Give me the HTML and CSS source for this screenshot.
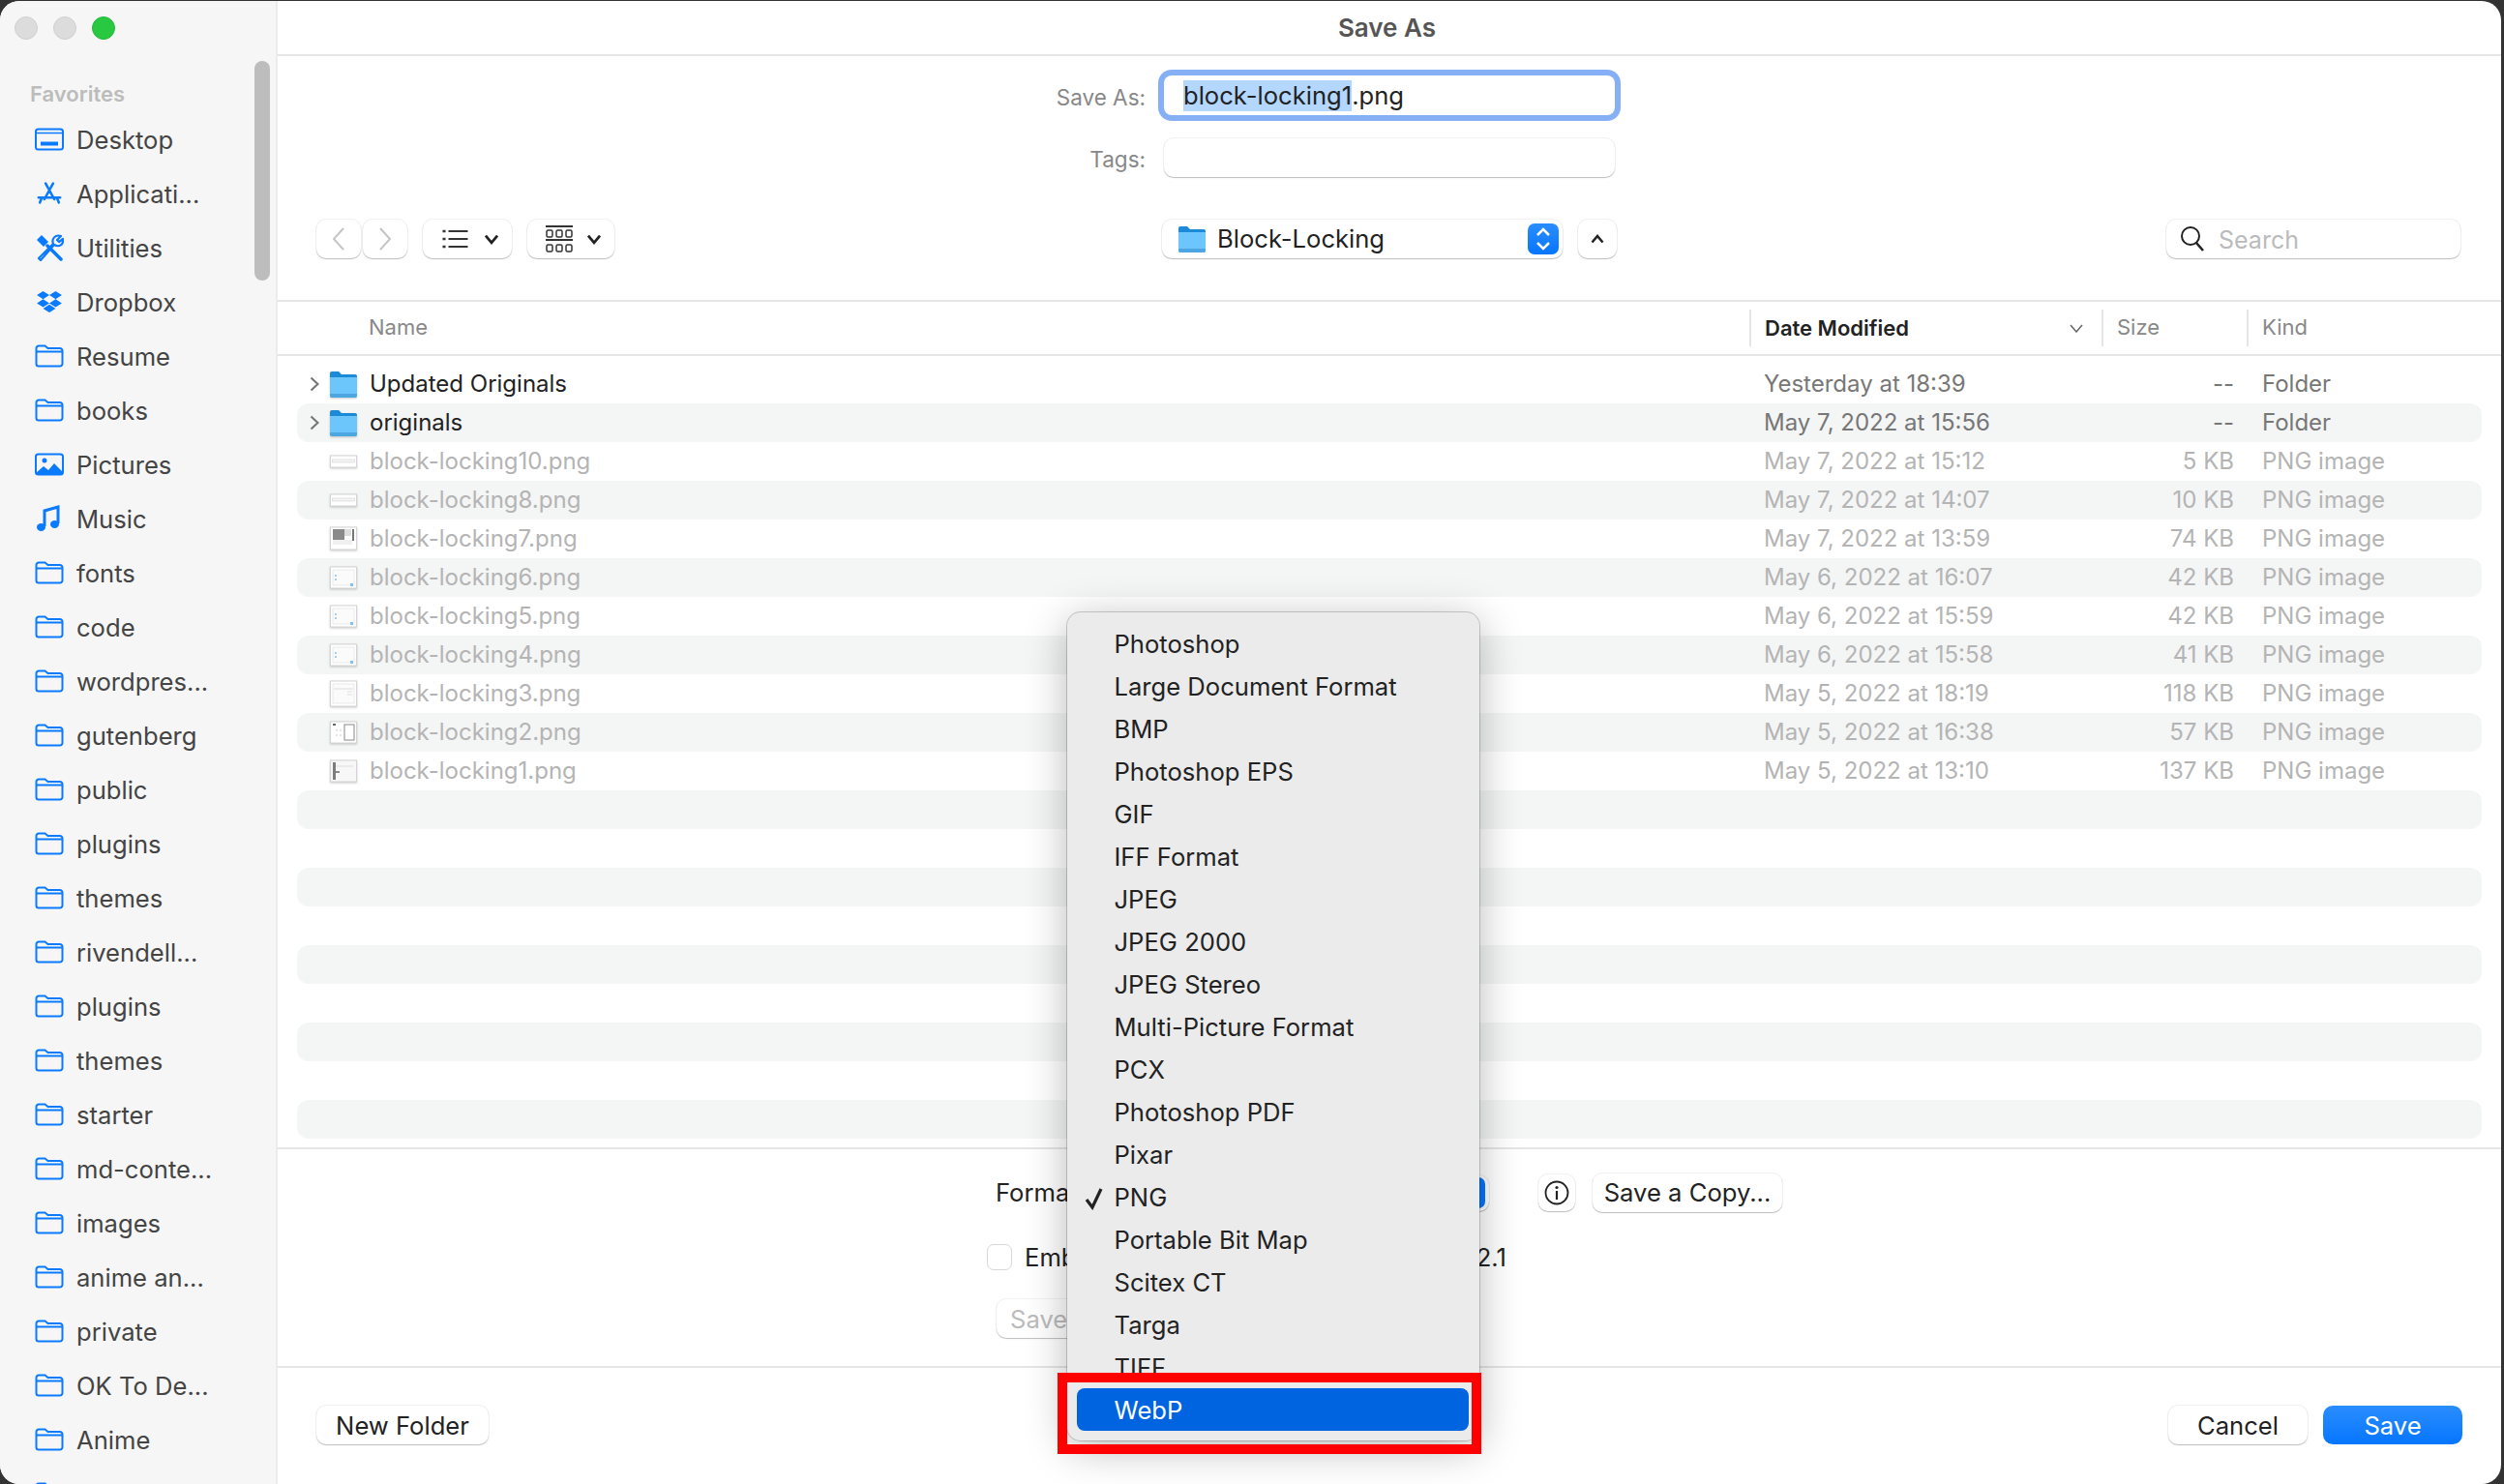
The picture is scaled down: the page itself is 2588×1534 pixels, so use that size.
FILE: index.html
```html
<!DOCTYPE html>
<html lang="en">
<head>
  <meta charset="UTF-8">
  <meta name="viewport" content="width=device-width, initial-scale=1.0">
  <title>Save As</title>
  <link rel="stylesheet" href="styles.css">
</head>
<body>
  <svg class="defs" width="0" height="0">
    <symbol id="i-folder" viewBox="0 0 30 24">
      <path d="M1.5 5V20a2.5 2.5 0 0 0 2.5 2.5H26a2.5 2.5 0 0 0 2.5-2.5V6.5a2.5 2.5 0 0 0-2.5-2.5H13.5L10.5 1.5H4A2.5 2.5 0 0 0 1.5 4ZM1.5 7.5H28.5" fill="none" stroke="#0a7aff" stroke-width="2"/>
    </symbol>
    <symbol id="i-blue" viewBox="0 0 28 28">
      <path d="M0 3a2 2 0 0 1 2-2h7l3 3h14a2 2 0 0 1 2 2v6H0Z" fill="#1c8ad6"/>
      <path d="M0 7h28v19a2 2 0 0 1-2 2H2a2 2 0 0 1-2-2Z" fill="#6cc5fb"/>
      <path d="M0 24h28v2a2 2 0 0 1-2 2H2a2 2 0 0 1-2-2Z" fill="#4ca6e2"/>
    </symbol>
    <symbol id="t-band" viewBox="0 0 28 28">
      <rect x=".5" y="8" width="27" height="12" fill="#fff" stroke="#d4d4d4"/>
      <rect x="2.5" y="12" width="23" height="3" fill="#f4f4f4" stroke="#d4d4d4" stroke-width=".6"/>
    </symbol>
    <symbol id="t-dark" viewBox="0 0 28 28">
      <rect x=".5" y="2" width="27" height="23" fill="#fff" stroke="#d4d4d4"/>
      <rect x="3" y="4" width="12" height="11" fill="#8a8a8a"/>
      <rect x="15" y="4" width="7" height="7" fill="#ddd"/>
      <rect x="23" y="4" width="2" height="12" fill="#777"/>
      <rect x="3" y="15" width="20" height="5" fill="#f0f0f0"/>
    </symbol>
    <symbol id="t-dialog" viewBox="0 0 28 28">
      <rect x=".5" y="3" width="27" height="22" fill="#fff" stroke="#d4d4d4"/>
      <rect x="3" y="6" width="22" height="16" fill="#fbfbfb" stroke="#ddd" stroke-width=".6"/>
      <rect x="5" y="11" width="2" height="2" fill="#a9cdea"/>
      <rect x="5" y="15" width="2" height="2" fill="#a9cdea"/>
      <rect x="21" y="20" width="3" height="3" fill="#86c1ec"/>
    </symbol>
    <symbol id="t-page" viewBox="0 0 28 28">
      <rect x=".5" y="1" width="27" height="26" fill="#fff" stroke="#d4d4d4"/>
      <rect x="3" y="4" width="22" height="20" fill="#fbfbfb" stroke="#ddd" stroke-width=".6"/>
      <path d="M4 9H24M18 12H23M18 15H23" stroke="#ddd"/>
    </symbol>
    <symbol id="t-split" viewBox="0 0 28 28">
      <rect x=".5" y="3" width="27" height="22" fill="#fff" stroke="#d4d4d4"/>
      <rect x="15" y="6" width="10" height="16" fill="#fff" stroke="#888"/>
      <rect x="3" y="5" width="3" height="2" fill="#666"/>
      <path d="M6 12H8M10 12H12M6 17H8M10 17H12" stroke="#ccc"/>
    </symbol>
    <symbol id="t-side" viewBox="0 0 28 28">
      <rect x=".5" y="3" width="27" height="22" fill="#f7f7f7" stroke="#d4d4d4"/>
      <rect x="3" y="5" width="3" height="18" fill="#7c7c7c"/>
      <path d="M6 9H24" stroke="#ddd"/>
      <path d="M6 15H10" stroke="#888" stroke-width="2"/>
    </symbol>
  </svg>

  <div class="window">
    <aside class="sidebar">
      <div class="traffic">
        <span class="light"></span>
        <span class="light"></span>
        <span class="light light-green"></span>
      </div>
      <div class="side-title">Favorites</div>
      <ul class="side-list">
        <li>
          <svg class="side-icon" viewBox="0 0 30 24"><rect x="1" y="1.5" width="28" height="21" rx="2.5" fill="none" stroke="#0a7aff" stroke-width="2"/><path d="M1 5.5H29" stroke="#0a7aff" stroke-width="1.5"/><rect x="6" y="14.5" width="18" height="4" fill="#0a7aff"/></svg>
          Desktop
        </li>
        <li>
          <svg class="side-icon" viewBox="0 0 30 28"><path d="M10.5 2 21 21M19.5 2 9 21M2 19H28M6 19 3.5 25M24 19 26.5 25" fill="none" stroke="#0a7aff" stroke-width="3" stroke-linecap="round"/></svg>
          Applicati...
        </li>
        <li>
          <svg class="side-icon side-icon-tall" viewBox="0 0 30 28"><path d="M2 6 7 1 14 8 9 13Z" fill="#0a7aff"/><path d="M13 12 27 26" fill="none" stroke="#0a7aff" stroke-width="3.5" stroke-linecap="round"/><path d="M4 25 19 10C17 5 21 0 27 2L23 6 25 8 29 5C30 11 25 14 20 11L6 27Z" fill="none" stroke="#0a7aff" stroke-width="2.2" stroke-linejoin="round"/></svg>
          Utilities
        </li>
        <li>
          <svg class="side-icon" viewBox="0 0 30 26"><path d="M8 1 15 5.5 8 10 1 5.5ZM22 1 29 5.5 22 10 15 5.5ZM8 10 15 14.5 8 19 1 14.500ZM22 10 29 14.5 22 19 15 14.5ZM8 20.5 15 16 22 20.5 15 25Z" fill="#0a7aff"/></svg>
          Dropbox
        </li>
        <li><svg class="side-icon"><use href="#i-folder"/></svg>Resume</li>
        <li><svg class="side-icon"><use href="#i-folder"/></svg>books</li>
        <li>
          <svg class="side-icon" viewBox="0 0 30 24"><rect x="1" y="1.5" width="28" height="21" rx="2.5" fill="none" stroke="#0a7aff" stroke-width="2"/><path d="M1 21 9 14 14 18 20 11 29 20V23H1Z" fill="#0a7aff"/><circle cx="10" cy="8" r="2.5" fill="#0a7aff"/></svg>
          Pictures
        </li>
        <li>
          <svg class="side-icon side-icon-tall" viewBox="0 0 30 28"><path d="M10 22V6L24 2V19" fill="none" stroke="#0a7aff" stroke-width="3"/><ellipse cx="6.5" cy="23" rx="4.5" ry="4" fill="#0a7aff"/><ellipse cx="20.5" cy="20" rx="4.5" ry="4" fill="#0a7aff"/></svg>
          Music
        </li>
        <li><svg class="side-icon"><use href="#i-folder"/></svg>fonts</li>
        <li><svg class="side-icon"><use href="#i-folder"/></svg>code</li>
        <li><svg class="side-icon"><use href="#i-folder"/></svg>wordpres...</li>
        <li><svg class="side-icon"><use href="#i-folder"/></svg>gutenberg</li>
        <li><svg class="side-icon"><use href="#i-folder"/></svg>public</li>
        <li><svg class="side-icon"><use href="#i-folder"/></svg>plugins</li>
        <li><svg class="side-icon"><use href="#i-folder"/></svg>themes</li>
        <li><svg class="side-icon"><use href="#i-folder"/></svg>rivendell...</li>
        <li><svg class="side-icon"><use href="#i-folder"/></svg>plugins</li>
        <li><svg class="side-icon"><use href="#i-folder"/></svg>themes</li>
        <li><svg class="side-icon"><use href="#i-folder"/></svg>starter</li>
        <li><svg class="side-icon"><use href="#i-folder"/></svg>md-conte...</li>
        <li><svg class="side-icon"><use href="#i-folder"/></svg>images</li>
        <li><svg class="side-icon"><use href="#i-folder"/></svg>anime an...</li>
        <li><svg class="side-icon"><use href="#i-folder"/></svg>private</li>
        <li><svg class="side-icon"><use href="#i-folder"/></svg>OK To De...</li>
        <li><svg class="side-icon"><use href="#i-folder"/></svg>Anime</li>
        <li><svg class="side-icon"><use href="#i-folder"/></svg></li>
      </ul>
      <div class="side-scroll"></div>
    </aside>

    <main class="main">
      <div class="titlebar">Save As</div>

      <div class="form-row form-row-first">
        <label class="form-label">Save As:</label>
        <div class="field field-focus"><span class="selected">block-locking1</span>.png</div>
      </div>
      <div class="form-row form-row-tags">
        <label class="form-label">Tags:</label>
        <div class="field"></div>
      </div>

      <div class="toolbar">
        <div class="btn nav-btn">
          <svg width="14" height="26" viewBox="0 0 14 26"><path d="M12 2 2 13 12 24" fill="none" stroke="#c4c4c4" stroke-width="2"/></svg>
        </div>
        <div class="btn nav-btn nav-next">
          <svg width="14" height="26" viewBox="0 0 14 26"><path d="M2 2 12 13 2 24" fill="none" stroke="#c4c4c4" stroke-width="2"/></svg>
        </div>
        <div class="btn view-btn view-list">
          <svg width="27" height="20" viewBox="0 0 26 20"><path d="M6 2H26M6 10H26M6 18H26" stroke="#333" stroke-width="2"/><path d="M0 2H3M0 10H3M0 18H3" stroke="#333" stroke-width="2.5"/></svg>
          <svg width="16" height="11" viewBox="0 0 14 10"><path d="M1.5 1.5 7 8 12.5 1.5" fill="none" stroke="#222" stroke-width="2.5"/></svg>
        </div>
        <div class="btn view-btn view-grid">
          <svg width="30" height="28" viewBox="0 0 28 28"><path d="M0 1H28M0 15H28" stroke="#333" stroke-width="2"/><g fill="none" stroke="#333" stroke-width="1.5"><rect x="1" y="5" width="6" height="7" rx="1.5"/><rect x="11" y="5" width="6" height="7" rx="1.5"/><rect x="21" y="5" width="6" height="7" rx="1.5"/><rect x="1" y="20" width="6" height="7" rx="1.5"/><rect x="11" y="20" width="6" height="7" rx="1.5"/><rect x="21" y="20" width="6" height="7" rx="1.5"/></g></svg>
          <svg width="16" height="11" viewBox="0 0 14 10"><path d="M1.5 1.5 7 8 12.5 1.5" fill="none" stroke="#222" stroke-width="2.5"/></svg>
        </div>
        <div class="btn place-popup">
          <svg class="place-icon"><use href="#i-blue"/></svg>
          <span class="place-name">Block-Locking</span>
          <span class="stepper">
            <svg width="18" height="26" viewBox="0 0 18 26"><path d="M3 9 9 3 15 9M3 17 9 23 15 17" fill="none" stroke="#fff" stroke-width="2.5"/></svg>
          </span>
        </div>
        <div class="btn up-btn">
          <svg width="14" height="10" viewBox="0 0 14 10"><path d="M1.5 8.5 7 2 12.5 8.5" fill="none" stroke="#222" stroke-width="2.5"/></svg>
        </div>
        <div class="btn search">
          <svg width="26" height="28" viewBox="0 0 26 28"><circle cx="11" cy="11" r="9" fill="none" stroke="#222" stroke-width="2"/><path d="M17 18 24 26" stroke="#222" stroke-width="2.5"/></svg>
          <span class="search-text">Search</span>
        </div>
      </div>

      <div class="list-head">
        <div class="head-name">Name</div>
        <div class="head-cell head-date">
          <span>Date Modified</span>
          <svg width="14" height="9" viewBox="0 0 14 9"><path d="M1 1 7 8 13 1" fill="none" stroke="#666" stroke-width="1.5"/></svg>
        </div>
        <div class="head-cell head-size">Size</div>
        <div class="head-cell head-kind">Kind</div>
      </div>

      <div class="files">
        <div class="file file-folder">
          <svg class="disclose" viewBox="0 0 10 16"><path d="M1.5 1.5 8.5 8 1.5 14.5" fill="none" stroke="#777" stroke-width="2.2"/></svg>
          <svg class="file-icon"><use href="#i-blue"/></svg>
          <span class="file-name">Updated Originals</span><span class="file-date">Yesterday at 18:39</span><span class="file-size">--</span><span class="file-kind">Folder</span>
        </div>
        <div class="file file-folder">
          <svg class="disclose" viewBox="0 0 10 16"><path d="M1.5 1.5 8.5 8 1.5 14.5" fill="none" stroke="#777" stroke-width="2.2"/></svg>
          <svg class="file-icon"><use href="#i-blue"/></svg>
          <span class="file-name">originals</span><span class="file-date">May 7, 2022 at 15:56</span><span class="file-size">--</span><span class="file-kind">Folder</span>
        </div>
        <div class="file">
          <svg class="file-icon"><use href="#t-band"/></svg>
          <span class="file-name">block-locking10.png</span><span class="file-date">May 7, 2022 at 15:12</span><span class="file-size">5 KB</span><span class="file-kind">PNG image</span>
        </div>
        <div class="file">
          <svg class="file-icon"><use href="#t-band"/></svg>
          <span class="file-name">block-locking8.png</span><span class="file-date">May 7, 2022 at 14:07</span><span class="file-size">10 KB</span><span class="file-kind">PNG image</span>
        </div>
        <div class="file">
          <svg class="file-icon"><use href="#t-dark"/></svg>
          <span class="file-name">block-locking7.png</span><span class="file-date">May 7, 2022 at 13:59</span><span class="file-size">74 KB</span><span class="file-kind">PNG image</span>
        </div>
        <div class="file">
          <svg class="file-icon"><use href="#t-dialog"/></svg>
          <span class="file-name">block-locking6.png</span><span class="file-date">May 6, 2022 at 16:07</span><span class="file-size">42 KB</span><span class="file-kind">PNG image</span>
        </div>
        <div class="file">
          <svg class="file-icon"><use href="#t-dialog"/></svg>
          <span class="file-name">block-locking5.png</span><span class="file-date">May 6, 2022 at 15:59</span><span class="file-size">42 KB</span><span class="file-kind">PNG image</span>
        </div>
        <div class="file">
          <svg class="file-icon"><use href="#t-dialog"/></svg>
          <span class="file-name">block-locking4.png</span><span class="file-date">May 6, 2022 at 15:58</span><span class="file-size">41 KB</span><span class="file-kind">PNG image</span>
        </div>
        <div class="file">
          <svg class="file-icon"><use href="#t-page"/></svg>
          <span class="file-name">block-locking3.png</span><span class="file-date">May 5, 2022 at 18:19</span><span class="file-size">118 KB</span><span class="file-kind">PNG image</span>
        </div>
        <div class="file">
          <svg class="file-icon"><use href="#t-split"/></svg>
          <span class="file-name">block-locking2.png</span><span class="file-date">May 5, 2022 at 16:38</span><span class="file-size">57 KB</span><span class="file-kind">PNG image</span>
        </div>
        <div class="file">
          <svg class="file-icon"><use href="#t-side"/></svg>
          <span class="file-name">block-locking1.png</span><span class="file-date">May 5, 2022 at 13:10</span><span class="file-size">137 KB</span><span class="file-kind">PNG image</span>
        </div>
        <div class="file"></div>
        <div class="file"></div>
        <div class="file"></div>
        <div class="file"></div>
        <div class="file"></div>
        <div class="file"></div>
        <div class="file"></div>
        <div class="file"></div>
        <div class="file"></div>
      </div>

      <div class="options">
        <div class="opt-format">
          <span class="opt-label">Format:</span>
          <div class="btn format-popup"><span class="format-stepper"></span></div>
          <div class="btn info-btn">
            <svg width="26" height="26" viewBox="0 0 26 26"><circle cx="13" cy="13" r="11.5" fill="none" stroke="#222" stroke-width="1.8"/><circle cx="13" cy="7.5" r="1.6" fill="#222"/><path d="M13 11V20" stroke="#222" stroke-width="2.2"/></svg>
          </div>
          <div class="btn copy-btn">Save a Copy...</div>
        </div>
        <div class="opt-embed">
          <span class="checkbox"></span>
          <span class="embed-text">Embed Color Profile: sRGB IEC61966-2.1</span>
        </div>
        <div class="btn opt-save">Save</div>
      </div>

      <div class="footer">
        <div class="btn new-folder">New Folder</div>
        <div class="btn cancel-btn">Cancel</div>
        <div class="btn save-btn">Save</div>
      </div>
    </main>
  </div>

  <ul class="menu">
    <li>Photoshop</li>
    <li>Large Document Format</li>
    <li>BMP</li>
    <li>Photoshop EPS</li>
    <li>GIF</li>
    <li>IFF Format</li>
    <li>JPEG</li>
    <li>JPEG 2000</li>
    <li>JPEG Stereo</li>
    <li>Multi-Picture Format</li>
    <li>PCX</li>
    <li>Photoshop PDF</li>
    <li>Pixar</li>
    <li class="menu-checked">
      <svg class="menu-check" viewBox="0 0 20 24"><path d="M2 13 8 21 17 2" fill="none" stroke="#222" stroke-width="3.2"/></svg>
      PNG
    </li>
    <li>Portable Bit Map</li>
    <li>Scitex CT</li>
    <li>Targa</li>
    <li>TIFF</li>
    <li class="menu-active">WebP</li>
  </ul>
  <div class="callout"></div>
</body>
</html>
```

FILE: styles.css
```css
html, body {
  margin: 0;
  padding: 0;
  height: 100%;
}

body {
  position: relative;
  overflow: hidden;
  background-color: #333;
  font-family: Inter, "Liberation Sans", sans-serif;
  font-size: 25.6px;
  color: #222;
}

ul {
  list-style: none;
  margin: 0;
  padding: 0;
}

.defs {
  position: absolute;
}

.window {
  display: flex;
  width: 2585px;
  height: 1533px;
  margin-top: 1px;
  background-color: #fff;
  border-radius: 20px;
  overflow: hidden;
}

/* sidebar */
.sidebar {
  position: relative;
  flex: none;
  width: 287px;
  height: 100%;
  box-sizing: border-box;
  background-color: #f6f6f6;
  border-right: 2px solid #ececec;
  overflow: hidden;
}

.traffic {
  display: flex;
  gap: 16px;
  padding: 16px 0 0 15px;
}

.light {
  width: 24px;
  height: 24px;
  box-sizing: border-box;
  border-radius: 50%;
  background-color: #dcdcdc;
  border: 1px solid #cfcfcf;
}

.light-green {
  background-color: #28c840;
  border-color: #25b93b;
}

.side-title {
  margin: 44px 0 0 31px;
  height: 24px;
  line-height: 24px;
  font-size: 22px;
  font-weight: 600;
  color: #bcbcbc;
}

.side-list {
  margin-top: 7px;
}

.side-list li {
  display: flex;
  align-items: center;
  height: 56px;
  color: #444;
  white-space: nowrap;
}

.side-icon {
  flex: none;
  width: 30px;
  height: 24px;
  margin: 0 13px 0 36px;
}

.side-icon-tall {
  height: 28px;
}

.side-scroll {
  position: absolute;
  top: 62px;
  left: 263px;
  width: 16px;
  height: 227px;
  border-radius: 8px;
  background-color: #bdbdbd;
}

/* main column */
.main {
  flex: 1;
  min-width: 0;
  display: flex;
  flex-direction: column;
}

.titlebar {
  flex: none;
  height: 55px;
  line-height: 55px;
  padding-right: 5px;
  text-align: center;
  font-size: 26px;
  font-weight: 600;
  color: #555;
  border-bottom: 2px solid #e5e5e5;
}

.btn {
  box-sizing: border-box;
  display: flex;
  align-items: center;
  justify-content: center;
  height: 40px;
  background-color: #fff;
  border-radius: 10px;
  box-shadow: 0 0 0 1px rgba(0, 0, 0, .05), 0 1px 1px rgba(0, 0, 0, .22);
}

.form-row {
  display: flex;
  align-items: center;
}

.form-row-first {
  margin-top: 20px;
}

.form-row-tags {
  margin-top: 24px;
}

.form-label {
  width: 897px;
  padding-top: 3px;
  text-align: right;
  font-size: 22.5px;
  color: #888;
}

.field {
  box-sizing: border-box;
  width: 466px;
  height: 40px;
  margin-left: 19px;
  padding-left: 20px;
  line-height: 42px;
  border-radius: 10px;
  background-color: #fff;
  box-shadow: 0 0 0 1px rgba(0, 0, 0, .05), 0 1px 1px rgba(0, 0, 0, .22);
}

.field-focus {
  height: 41px;
  border-radius: 8px;
  box-shadow: 0 0 0 6px #86b0f6;
}

.selected {
  display: inline-block;
  height: 32px;
  line-height: 32px;
  background-color: #b3d7ff;
}

.toolbar {
  flex: none;
  display: flex;
  height: 40px;
  margin-top: 44px;
  padding-left: 40px;
}

.nav-btn {
  width: 46px;
}

.nav-next {
  margin-left: 2px;
}

.view-btn {
  justify-content: flex-start;
}

.view-list {
  width: 92px;
  margin-left: 16px;
  padding-left: 20px;
  gap: 16px;
}

.view-grid {
  width: 90px;
  margin-left: 16px;
  padding-left: 18px;
  gap: 13px;
}

.place-popup {
  width: 414px;
  margin-left: 566px;
  padding: 0 4px 0 17px;
  justify-content: flex-start;
}

.place-icon {
  flex: none;
  width: 28px;
  height: 28px;
}

.place-name {
  margin-left: 12px;
  padding-bottom: 2px;
}

.stepper {
  display: flex;
  align-items: center;
  justify-content: center;
  width: 32px;
  height: 32px;
  margin-left: auto;
  border-radius: 7px;
  background: linear-gradient(#2a8dfd, #0676ff);
}

.up-btn {
  width: 40px;
  margin-left: 16px;
}

.search {
  width: 304px;
  margin-left: 568px;
  padding-left: 14px;
  justify-content: flex-start;
}

.search-text {
  margin-left: 14px;
  padding-top: 2px;
  color: #bbb;
  font-size: 25px;
}

.list-head {
  flex: none;
  display: flex;
  align-items: center;
  height: 54px;
  margin-top: 43px;
  padding-left: 94px;
  border-top: 2px solid #e5e5e5;
  border-bottom: 2px solid #e5e5e5;
  font-size: 22px;
  color: #888;
}

.head-name {
  width: 1427px;
  padding-bottom: 2px;
}

.head-cell {
  box-sizing: border-box;
  height: 38px;
  line-height: 36px;
  padding-left: 14px;
  border-left: 2px solid #e5e5e5;
}

.head-date {
  display: flex;
  align-items: center;
  justify-content: space-between;
  width: 364px;
  padding-right: 19px;
  font-weight: 600;
  color: #222;
}

.head-size {
  width: 150px;
}

.files {
  flex: none;
  height: 800px;
  padding: 9px 20px;
  border-bottom: 2px solid #e5e5e5;
}

.file {
  display: grid;
  grid-template-columns: 34px 41px 1441px 341px 145px 1fr;
  align-items: center;
  height: 40px;
  line-height: 38px;
  border-radius: 12px;
  color: #b4b4b4;
}

.file:nth-child(even) {
  background-color: #f4f5f5;
}

.disclose {
  grid-column: 1;
  width: 10px;
  height: 16px;
  margin-left: 13px;
}

.file-icon {
  grid-column: 2;
  width: 28px;
  height: 28px;
  filter: drop-shadow(0 1px 1px rgba(0, 0, 0, .2));
}

.file-name {
  grid-column: 3;
  white-space: nowrap;
  font-size: 24px;
}

.file-date, .file-size, .file-kind {
  font-size: 24px;
}

.file-size {
  text-align: right;
}

.file-kind {
  padding-left: 29px;
}

.file-folder .file-name {
  color: #222;
}

.file-folder .file-date,
.file-folder .file-size,
.file-folder .file-kind {
  color: #777;
}

/* format options, mostly hidden by the menu */
.options {
  flex: none;
  box-sizing: border-box;
  height: 226px;
  padding: 25px 0 0 733px;
  border-bottom: 2px solid #e5e5e5;
}

.opt-format {
  display: flex;
  align-items: center;
  height: 40px;
}

.opt-label {
  width: 120px;
  padding-left: 9px;
  line-height: 36px;
}

.format-popup {
  width: 400px;
  height: 37px;
  margin-left: -10px;
  padding-right: 4px;
  justify-content: flex-end;
}

.format-stepper {
  width: 24px;
  height: 32px;
  border-radius: 7px;
  background-color: #0676ff;
}

.info-btn {
  width: 38px;
  height: 38px;
  margin-left: 51px;
}

.copy-btn {
  width: 196px;
  margin-left: 18px;
  padding-bottom: 2px;
}

.opt-embed {
  display: flex;
  align-items: center;
  margin-top: 33px;
  height: 27px;
}

.checkbox {
  flex: none;
  box-sizing: border-box;
  width: 26px;
  height: 27px;
  border-radius: 7px;
  background-color: #fff;
  border: 1px solid #d8d8d8;
}

.embed-text {
  margin-left: 13px;
  white-space: nowrap;
  word-spacing: 3px;
}

.opt-save {
  width: 200px;
  margin: 30px 0 0 10px;
  padding-left: 14px;
  justify-content: flex-start;
  color: #bbb;
}

.footer {
  flex: 1;
  display: flex;
  align-items: flex-start;
  padding: 39px 40px 0 40px;
}

.new-folder {
  width: 178px;
}

.cancel-btn {
  width: 144px;
  margin-left: auto;
}

.save-btn {
  width: 144px;
  margin-left: 16px;
  color: #fff;
  background: linear-gradient(#2a8dfd, #0676ff);
  box-shadow: none;
}

/* popup menu over the dialog */
.menu {
  position: absolute;
  top: 633px;
  left: 1103px;
  width: 426px;
  box-sizing: border-box;
  padding: 10px 0;
  background-color: #ebebeb;
  border-radius: 14px;
  box-shadow: 0 0 0 1px rgba(0, 0, 0, .18), 0 8px 44px rgba(0, 0, 0, .28);
}

.menu li {
  position: relative;
  height: 44px;
  line-height: 46px;
  padding-left: 48.5px;
}

.menu-check {
  position: absolute;
  left: 18px;
  top: 12px;
  width: 20px;
  height: 24px;
}

.menu li.menu-active {
  margin: 0 11px 0 10px;
  padding-left: 38.5px;
  border-radius: 8px;
  background-color: #0064e1;
  color: #fff;
}

.callout {
  position: absolute;
  top: 1419px;
  left: 1093px;
  width: 438px;
  height: 84px;
  box-sizing: border-box;
  border: 10px solid #ff0000;
}
```
